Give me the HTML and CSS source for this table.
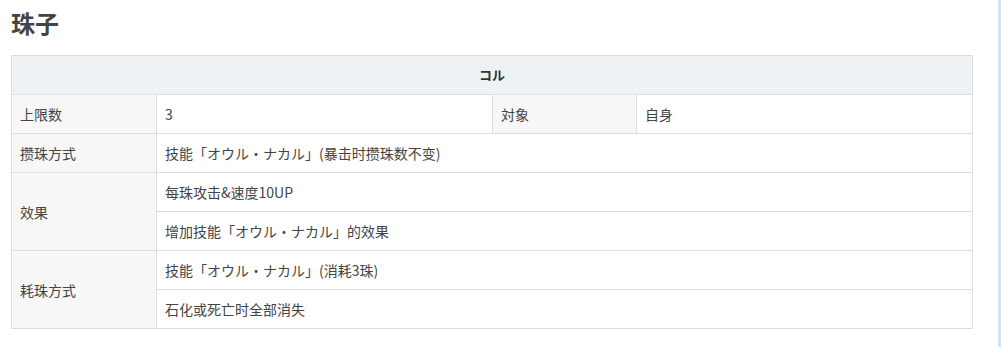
FILE: index.html
```html
<!DOCTYPE html>
<html lang="zh">
<head>
<meta charset="utf-8">
<link rel="stylesheet" href="styles.css">
</head>
<body>
<div class="page">
  <main class="main">
    <h2 class="title">珠子</h2>
    <table class="info">
      <colgroup>
        <col class="c1"><col class="c2"><col class="c3"><col class="c4">
      </colgroup>
      <thead>
        <tr><th colspan="4">コル</th></tr>
      </thead>
      <tbody>
        <tr><td class="label">上限数</td><td>3</td><td class="label">対象</td><td>自身</td></tr>
        <tr><td class="label">攒珠方式</td><td colspan="3">技能「オウル・ナカル」(暴击时攒珠数不变)</td></tr>
        <tr><td class="label" rowspan="2">效果</td><td colspan="3">每珠攻击&amp;速度10UP</td></tr>
        <tr><td colspan="3">增加技能「オウル・ナカル」的效果</td></tr>
        <tr><td class="label" rowspan="2">耗珠方式</td><td colspan="3">技能「オウル・ナカル」(消耗3珠)</td></tr>
        <tr><td colspan="3">石化或死亡时全部消失</td></tr>
      </tbody>
    </table>
  </main>
  <div class="sidebar"></div>
</div>
</body>
</html>
```

FILE: styles.css
```css
html, body {
  margin: 0;
  padding: 0;
  background: #fff;
}
body {
  font-family: "Noto Sans CJK SC", "Noto Sans", sans-serif;
  color: #444;
}
.page {
  display: flex;
  align-items: flex-start;
}
.main {
  margin-left: 11px;
  width: 962px;
}
.title {
  margin: 6px 0 15px 0;
  font-size: 24px;
  line-height: 34px;
  font-weight: bold;
  color: #444;
}
.info {
  width: 961px;
  border-collapse: collapse;
  table-layout: fixed;
  font-size: 14px;
  color: #444;
}
.c1 { width: 145px; }
.c2 { width: 336px; }
.c3 { width: 144px; }
.c4 { width: 336px; }
.info th,
.info td {
  border: 1px solid #dedede;
  height: 39px;
  padding: 0 8px;
  box-sizing: border-box;
  text-align: left;
  vertical-align: middle;
  line-height: 20px;
  font-weight: normal;
}
.info th {
  background: #eef2f5;
  text-align: center;
  font-weight: bold;
  font-size: 13px;
  color: #333;
}
.info td.label {
  background: #f7f7f7;
}
.sidebar {
  margin-left: 25px;
  width: 4px;
  height: 347px;
  background: #d2e3f3;
}
```
